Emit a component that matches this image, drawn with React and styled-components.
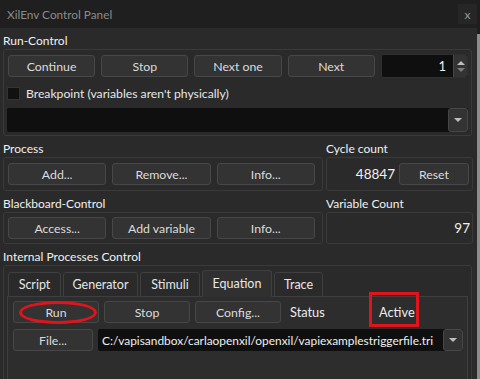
import React from "react";
import styled, { createGlobalStyle } from "styled-components";

const GlobalStyle = createGlobalStyle`
  body {
    margin: 0;
    background: #2a2a2a;
    font-family: Lato, "Noto Sans", sans-serif;
    font-size: 12px;
  }
`;

const Screen = styled.div`
  display: flex;
  flex-direction: row;
  align-items: flex-start;
  width: 480px;
  height: 379px;
  overflow: hidden;
`;

const Window = styled.div`
  display: flex;
  flex-direction: column;
  flex-shrink: 0;
  width: 477px;
  min-height: 379px;
  background: #2a2a2a;
  & > * {
    flex-shrink: 0;
  }
`;

const SideStrip = styled.div`
  flex: 1;
  align-self: stretch;
  background: linear-gradient(#1e1e1e 0 34px, #8c8c8c 34px);
`;

const TitleBar = styled.div`
  display: flex;
  align-items: center;
  justify-content: space-between;
  height: 28px;
  padding-left: 7px;
  background: #1f1f1f;
`;

const TitleText = styled.span`
  color: #8a8a8a;
  font-size: 11.8px;
`;

const CloseButton = styled.div`
  display: flex;
  align-items: center;
  justify-content: center;
  width: 19px;
  height: 20px;
  background: #262626;
  color: #9a9a9a;
  font-size: 12px;
`;

const Body = styled.div`
  display: flex;
  flex-direction: column;
  padding: 0 5px 0 3px;
`;

const SectionLabel = styled.div`
  height: 17px;
  line-height: 17px;
  padding-top: 4px;
  color: #f0f0f0;
  font-size: 12px;
  white-space: nowrap;
`;

const GroupBox = styled.div`
  display: flex;
  flex-direction: column;
  border: 1px solid #3a3a3a;
  border-radius: 3px;
  padding: ${(p) => p.$pad || "5px 3px 5px 4px"};
`;

const ButtonRow = styled.div`
  display: flex;
  align-items: center;
  gap: ${(p) => p.$gap || 6}px;
  height: ${(p) => p.$height || 22}px;
  padding-left: ${(p) => p.$indent || 0}px;
  position: relative;
`;

const Button = styled.div`
  flex: ${(p) => (p.$width ? "none" : 1)};
  width: ${(p) => (p.$width ? `${p.$width}px` : "auto")};
  height: 20px;
  display: flex;
  align-items: center;
  justify-content: center;
  background: #333333;
  border: 1px solid #474747;
  border-radius: 3px;
  color: #dcdcdc;
  font-size: 12.3px;
  white-space: nowrap;
`;

const SpinBox = styled.div`
  flex: 1;
  display: flex;
  height: 22px;
  border: 1px solid #2f2f2f;
  border-radius: 2px;
  background: #0f0f0f;
`;

const SpinValue = styled.div`
  flex: 1;
  display: flex;
  align-items: center;
  justify-content: flex-end;
  padding-right: 7px;
  color: #f0f0f0;
  font-size: 13px;
`;

const SpinArrows = styled.div`
  width: 13px;
  display: flex;
  flex-direction: column;
  align-items: center;
  justify-content: center;
  gap: 3px;
  background: #333333;
  border-left: 1px solid #474747;
  border-radius: 0 2px 2px 0;
`;

const Arrow = styled.div`
  width: 0;
  height: 0;
  border-left: 4px solid transparent;
  border-right: 4px solid transparent;
  ${(p) =>
    p.$up
      ? `border-bottom: 4px solid ${p.$color || "#bdbdbd"};`
      : `border-top: 4px solid ${p.$color || "#bdbdbd"};`}
`;

const CheckRow = styled.div`
  display: flex;
  align-items: center;
  gap: 6px;
  height: 30px;
  color: #e6e6e6;
  font-size: 12.2px;
  white-space: nowrap;
`;

const CheckBox = styled.div`
  width: 11px;
  height: 11px;
  background: #111111;
  border: 1px solid #333333;
`;

const ComboBox = styled.div`
  display: flex;
  flex: ${(p) => (p.$grow ? 1 : "none")};
  height: ${(p) => p.$height || 24}px;
  background: #0f0f0f;
  border-radius: 2px;
`;

const ComboText = styled.div`
  flex: 1;
  display: flex;
  align-items: center;
  padding-left: 4px;
  color: #f0f0f0;
  font-size: 11.9px;
  white-space: nowrap;
  overflow: hidden;
`;

const ComboArrow = styled.div`
  width: 18px;
  display: flex;
  align-items: center;
  justify-content: center;
  background: #333333;
  border: 1px solid #474747;
  border-radius: 3px;
`;

const SplitRow = styled.div`
  display: grid;
  grid-template-columns: 320px 147px;
  column-gap: 3px;
`;

const Column = styled.div`
  display: flex;
  flex-direction: column;
`;

const CountValue = styled.div`
  flex: 1;
  display: flex;
  align-items: center;
  justify-content: flex-end;
  color: #f0f0f0;
  font-size: 13.5px;
`;

const TabBar = styled.div`
  display: flex;
  align-items: flex-end;
  gap: 2px;
  height: 26px;
  margin-left: 1px;
  margin-bottom: -1px;
  position: relative;
`;

const Tab = styled.div`
  height: ${(p) => (p.$active ? 27 : 25)}px;
  width: ${(p) => p.$width}px;
  box-sizing: border-box;
  display: flex;
  align-items: center;
  justify-content: center;
  background: ${(p) => (p.$active ? "#303030" : "#2a2a2a")};
  border: 1px solid #3f3f3f;
  border-bottom: ${(p) => (p.$active ? "1px solid #303030" : "1px solid #3f3f3f")};
  border-radius: 3px 3px 0 0;
  color: #e6e6e6;
  font-size: 12.5px;
`;

const TabPane = styled.div`
  display: flex;
  flex-direction: column;
  gap: 6px;
  height: 90px;
  padding: 4px 4px 0 5px;
  background: #2d2d2d;
  border: 1px solid #3f3f3f;
`;

const StatusCell = styled.div`
  flex: 1;
  padding-left: ${(p) => p.$indent ?? 4}px;
  color: #ececec;
  font-size: 12.8px;
`;

const RedEllipse = styled.div`
  position: absolute;
  left: 6px;
  top: 0;
  width: 72px;
  height: 17px;
  border: 3px solid #e0141c;
  border-radius: 50%;
  pointer-events: none;
`;

const RedBox = styled.div`
  position: absolute;
  left: 356px;
  top: -9px;
  width: 44px;
  height: 29px;
  border: 3px solid #e0141c;
  pointer-events: none;
`;

export default function App() {
  return (
    <>
      <GlobalStyle />
      <Screen>
        <Window>
          <TitleBar>
            <TitleText>XilEnv Control Panel</TitleText>
            <CloseButton>x</CloseButton>
          </TitleBar>
          <Body>
            <SectionLabel>Run-Control</SectionLabel>
            <GroupBox $pad="4px 3px 3px 3px">
              <ButtonRow $height={24} $indent={1}>
                <Button>Continue</Button>
                <Button>Stop</Button>
                <Button>Next one</Button>
                <Button>Next</Button>
                <SpinBox>
                  <SpinValue>1</SpinValue>
                  <SpinArrows>
                    <Arrow $up />
                    <Arrow $color="#7a7a7a" />
                  </SpinArrows>
                </SpinBox>
              </ButtonRow>
              <CheckRow>
                <CheckBox />
                Breakpoint (variables aren't physically)
              </CheckRow>
              <ComboBox>
                <ComboText />
                <ComboArrow>
                  <Arrow />
                </ComboArrow>
              </ComboBox>
            </GroupBox>

            <SplitRow>
              <Column>
                <SectionLabel>Process</SectionLabel>
                <GroupBox $pad="5px 7px 5px 4px">
                  <ButtonRow>
                    <Button>Add...</Button>
                    <Button>Remove...</Button>
                    <Button>Info...</Button>
                  </ButtonRow>
                </GroupBox>
              </Column>
              <Column>
                <SectionLabel>Cycle count</SectionLabel>
                <GroupBox $pad="5px 3px 5px 4px">
                  <ButtonRow $gap={4}>
                    <CountValue>48847</CountValue>
                    <Button $width={68}>Reset</Button>
                  </ButtonRow>
                </GroupBox>
              </Column>
            </SplitRow>

            <SplitRow>
              <Column>
                <SectionLabel>Blackboard-Control</SectionLabel>
                <GroupBox $pad="4px 7px 4px 4px">
                  <ButtonRow>
                    <Button>Access...</Button>
                    <Button>Add variable</Button>
                    <Button>Info...</Button>
                  </ButtonRow>
                </GroupBox>
              </Column>
              <Column>
                <SectionLabel>Variable Count</SectionLabel>
                <GroupBox $pad="4px 2px 4px 4px">
                  <ButtonRow>
                    <CountValue>97</CountValue>
                  </ButtonRow>
                </GroupBox>
              </Column>
            </SplitRow>

            <SectionLabel>Internal Processes Control</SectionLabel>
            <GroupBox $pad="5px 3px 0 3px">
              <TabBar>
                <Tab $width={53}>Script</Tab>
                <Tab $width={75}>Generator</Tab>
                <Tab $width={60}>Stimuli</Tab>
                <Tab $width={70} $active>
                  Equation
                </Tab>
                <Tab $width={49}>Trace</Tab>
              </TabBar>
              <TabPane>
                <ButtonRow $gap={5}>
                  <Button>Run</Button>
                  <Button>Stop</Button>
                  <Button>Config...</Button>
                  <StatusCell>Status</StatusCell>
                  <StatusCell $indent={0}>Active</StatusCell>
                  <RedEllipse />
                  <RedBox />
                </ButtonRow>
                <ButtonRow $gap={5}>
                  <Button $width={78}>File...</Button>
                  <ComboBox $grow $height={22}>
                    <ComboText>
                      C:/vapisandbox/carlaopenxil/openxil/vapiexamplestriggerfile.tri
                    </ComboText>
                    <ComboArrow>
                      <Arrow />
                    </ComboArrow>
                  </ComboBox>
                </ButtonRow>
              </TabPane>
            </GroupBox>
          </Body>
        </Window>
        <SideStrip />
      </Screen>
    </>
  );
}
